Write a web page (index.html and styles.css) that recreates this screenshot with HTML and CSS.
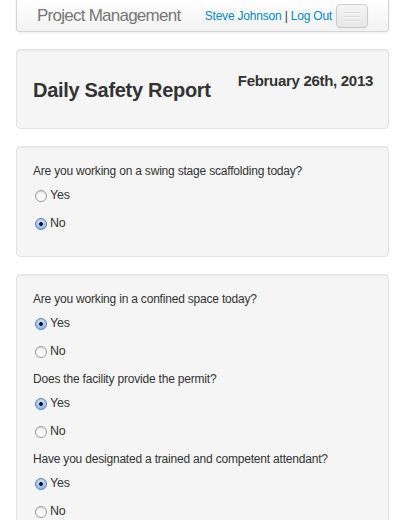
FILE: index.html
```html
<!DOCTYPE html>
<html>
<head>
<meta charset="utf-8">
<link rel="stylesheet" href="styles.css">
</head>
<body>
<div class="page">
  <div class="navbar">
    <span class="brand">Project Management</span>
    <div class="nav-right">
      <span class="user"><a href="#">Steve Johnson</a> | <a href="#">Log Out</a></span>
      <button class="toggle" type="button">
        <span class="bar"></span><span class="bar"></span><span class="bar"></span>
      </button>
    </div>
  </div>

  <div class="well header-well">
    <h1 class="title">Daily Safety Report</h1>
    <h4 class="date">February 26th, 2013</h4>
  </div>

  <div class="well form-well">
    <p class="question">Are you working on a swing stage scaffolding today?</p>
    <label class="radio"><input type="radio" name="q1"><span>Yes</span></label>
    <label class="radio"><input type="radio" name="q1" checked><span>No</span></label>
  </div>

  <div class="well form-well">
    <p class="question">Are you working in a confined space today?</p>
    <label class="radio"><input type="radio" name="q2" checked><span>Yes</span></label>
    <label class="radio"><input type="radio" name="q2"><span>No</span></label>
    <p class="question">Does the facility provide the permit?</p>
    <label class="radio"><input type="radio" name="q3" checked><span>Yes</span></label>
    <label class="radio"><input type="radio" name="q3"><span>No</span></label>
    <p class="question">Have you designated a trained and competent attendant?</p>
    <label class="radio"><input type="radio" name="q4" checked><span>Yes</span></label>
    <label class="radio"><input type="radio" name="q4"><span>No</span></label>
  </div>
</div>
</body>
</html>
```

FILE: styles.css
```css
html, body {
  margin: 0;
  padding: 0;
  background: #ffffff;
}
body {
  font-family: "Liberation Sans", Arial, Helvetica, sans-serif;
  font-size: 12px;
  letter-spacing: -0.2px;
  color: #333333;
}
.page {
  padding: 0 16px;
}
.navbar {
  display: flex;
  align-items: center;
  justify-content: space-between;
  height: 32px;
  box-sizing: border-box;
  padding: 0 20px 0 20px;
  background: linear-gradient(#ffffff, #f2f2f2);
  border: 1px solid #d4d4d4;
  border-top: none;
  border-radius: 0 0 4px 4px;
  box-shadow: 0 1px 3px rgba(0,0,0,0.08);
  margin-bottom: 17px;
  white-space: nowrap;
}
.brand {
  font-size: 17px;
  letter-spacing: -0.75px;
  color: #777777;
  line-height: 20px;
  margin-top: 1px;
}
.nav-right {
  display: flex;
  align-items: center;
  gap: 4px;
}
.user {
  color: #333;
  font-size: 12px;
  letter-spacing: -0.2px;
  margin-top: 1px;
}
.user a {
  color: #0088cc;
  text-decoration: none;
}
.toggle {
  width: 32px;
  height: 24px;
  margin-top: 1px;
  box-sizing: border-box;
  padding: 0;
  border: 1px solid #cccccc;
  border-radius: 4px;
  background: linear-gradient(#f5f5f5, #e6e6e6);
  box-shadow: inset 0 1px 0 rgba(255,255,255,0.2), 0 1px 2px rgba(0,0,0,0.05);
  display: flex;
  flex-direction: column;
  align-items: center;
  justify-content: center;
  gap: 3px;
}
.bar {
  display: block;
  width: 16px;
  height: 1px;
  background: #d8d8d8;
  box-shadow: 0 1px 0 #f8f8f8;
}
.well {
  background: #f5f5f5;
  border: 1px solid #e3e3e3;
  border-radius: 4px;
  box-shadow: inset 0 1px 1px rgba(0,0,0,0.05);
  margin-bottom: 17px;
}
.header-well {
  display: flex;
  justify-content: space-between;
  align-items: flex-start;
  height: 80px;
  box-sizing: border-box;
  padding: 0 15px 0 16px;
}
.title {
  margin: 28px 0 0 0;
  font-size: 20px;
  letter-spacing: -0.3px;
  line-height: 24px;
  font-weight: bold;
  color: #333;
}
.date {
  margin: 21px 0 0 0;
  font-size: 15px;
  letter-spacing: -0.3px;
  line-height: 20px;
  font-weight: bold;
  color: #333;
}
.form-well {
  padding: 14px 16px 23px 16px;
}
.question {
  margin: 0 0 4px 0;
  line-height: 20px;
}
.radio + .question {
  margin-top: 1px;
}
.radio {
  display: flex;
  align-items: center;
  height: 20px;
  margin-bottom: 8px;
  padding-left: 2px;
}
.radio:last-child {
  margin-bottom: 0;
}
.radio span {
  font-size: 12.5px;
}
.radio input {
  -webkit-appearance: none;
  appearance: none;
  width: 12px;
  height: 12px;
  margin: 2px 3px 0 0;
  border-radius: 50%;
  border: 1px solid #9a9a9a;
  background: linear-gradient(#f0f0f0, #ffffff);
  box-shadow: inset 0 1px 1px rgba(0,0,0,0.1);
  box-sizing: border-box;
}
.radio input:checked {
  border-color: #5a7fb5;
  background: radial-gradient(circle, #1a1a1a 0, #1a1a1a 1.6px, transparent 2.2px), linear-gradient(#cfe2fb, #8db8ee);
}
```
